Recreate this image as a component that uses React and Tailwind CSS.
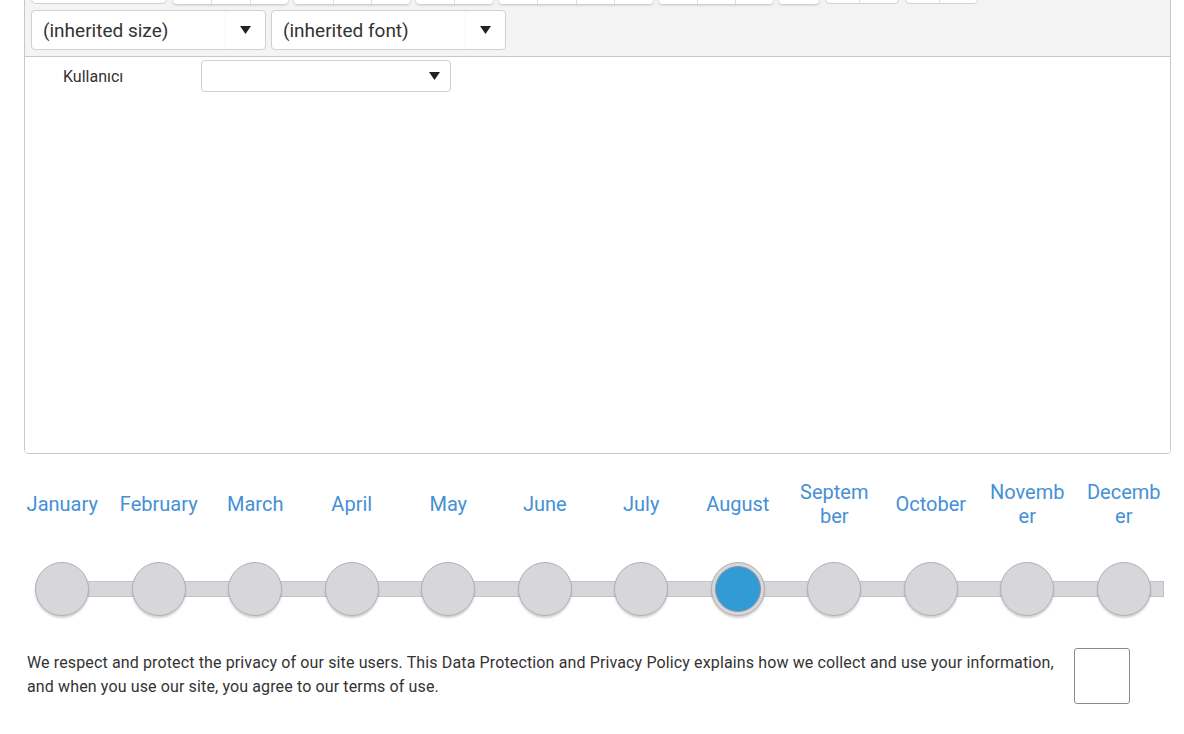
import React from 'react';

const groups = [
  { widths: [38, 39, 38], x: 'shadow' },
  { widths: [39, 38, 39], x: 'shadow' },
  { widths: [38, 39], x: 'shadow' },
  { widths: [38, 39, 38, 39], x: 'shadow' },
  { widths: [38, 38, 38], x: 'shadow' },
  { widths: [40], x: 'shadow' },
  { widths: [33, 39], x: 'flat' },
  { widths: [33, 38], x: 'flat' },
];

const months = [
  ['January'], ['February'], ['March'], ['April'], ['May'], ['June'],
  ['July'], ['August'], ['Septem', 'ber'], ['October'], ['Novemb', 'er'], ['Decemb', 'er'],
];

const Arrow = () => (
  <svg width="11" height="8" viewBox="0 0 11 8">
    <path d="M0 0 L11 0 L5.5 8 Z" fill="#222" />
  </svg>
);

const Select = ({ label, width }) => (
  <div
    className="flex h-[40px] items-center rounded-[4px] border border-[#d0d0d0] bg-white"
    style={{ width }}
  >
    <span className="flex-1 pl-[11px] pt-[2px] text-[19px] text-[#333]">{label}</span>
    <span className="flex h-full w-[40px] items-center justify-center border-l border-[#f6f6f6]">
      <Arrow />
    </span>
  </div>
);

export default function App() {
  return (
    <div className="min-h-[734px] bg-white font-['Roboto',sans-serif]">
      <div className="ml-[24px] mt-[-37px] w-[1147px] overflow-hidden rounded-[4px] border border-[#c8c8c8]">
        <div className="border-b border-[#c8c8c8] bg-[#f4f4f4] px-[6px] pb-[6px] pt-[6px]">
          <div className="flex h-[34px] gap-[6px]">
            <div className="h-full w-[136px] rounded-[5px] border border-[#d0d0d0] bg-white" />
            {groups.map((g, i) => (
              <div
                key={i}
                className={
                  g.x === 'shadow'
                    ? 'flex h-full rounded-[4px] bg-white shadow-[0_1px_3px_rgba(0,0,0,0.22)]'
                    : 'flex h-full rounded-[4px] border border-[#d4d4d4] bg-white'
                }
              >
                {g.widths.map((w, j) => (
                  <div
                    key={j}
                    className={j ? 'h-full border-l border-[#dedede]' : 'h-full'}
                    style={{ width: w }}
                  />
                ))}
              </div>
            ))}
          </div>
          <div className="mt-[6px] flex gap-[5px]">
            <Select label="(inherited size)" width={235} />
            <Select label="(inherited font)" width={235} />
          </div>
        </div>
        <div className="h-[396px] bg-white pt-[3px]">
          <div className="flex items-center">
            <span className="w-[176px] pl-[38px] pt-[2px] text-[16px] text-[#333]">Kullanıcı</span>
            <div className="flex h-[32px] w-[250px] items-center justify-end rounded-[4px] border border-[#cfcfcf] bg-white pr-[10px]">
              <Arrow />
            </div>
          </div>
        </div>
      </div>

      <div className="ml-[14px] mt-[26px] w-[1158px]">
        <div className="grid grid-cols-12">
          {months.map((m, i) => (
            <div key={i} className="flex h-[48px] flex-col items-center justify-center text-center text-[20px] leading-[24px] text-[#4590d6]">
              {m.map((line, k) => (
                <span key={k}>{line}</span>
              ))}
            </div>
          ))}
        </div>
        <div className="relative mt-[34px] h-[54px]">
          <div className="absolute left-[47px] top-[19px] h-[16px] w-[1103px] border-y border-r border-[#c2c2ca] bg-[#d7d7d9]" />
          <div className="relative grid grid-cols-12">
            {months.map((m, i) => (
              <div key={i} className="flex justify-center">
                <div className="flex h-[54px] w-[54px] items-center justify-center rounded-full border border-[#aeb0bc] bg-[#d7d7d9] shadow-[0_2px_2px_rgba(0,0,0,0.18)]">
                  {i === 7 && (
                    <div className="h-[46px] w-[46px] rounded-full border border-[#8d93a0] bg-[#329bd5]" />
                  )}
                </div>
              </div>
            ))}
          </div>
        </div>
      </div>

      <div className="mt-[32px] flex items-start pl-[27px]">
        <p className="w-[1035px] pt-[3px] text-[16px] leading-[24px] tracking-[0.13px] text-[#333]">
          We respect and protect the privacy of our site users. This Data Protection and Privacy Policy explains how we collect and use your information, and when you use our site, you agree to our terms of use.
        </p>
        <div className="ml-[12px] h-[56px] w-[56px] rounded-[3px] border border-[#8a8a8a] bg-white" />
      </div>
    </div>
  );
}
